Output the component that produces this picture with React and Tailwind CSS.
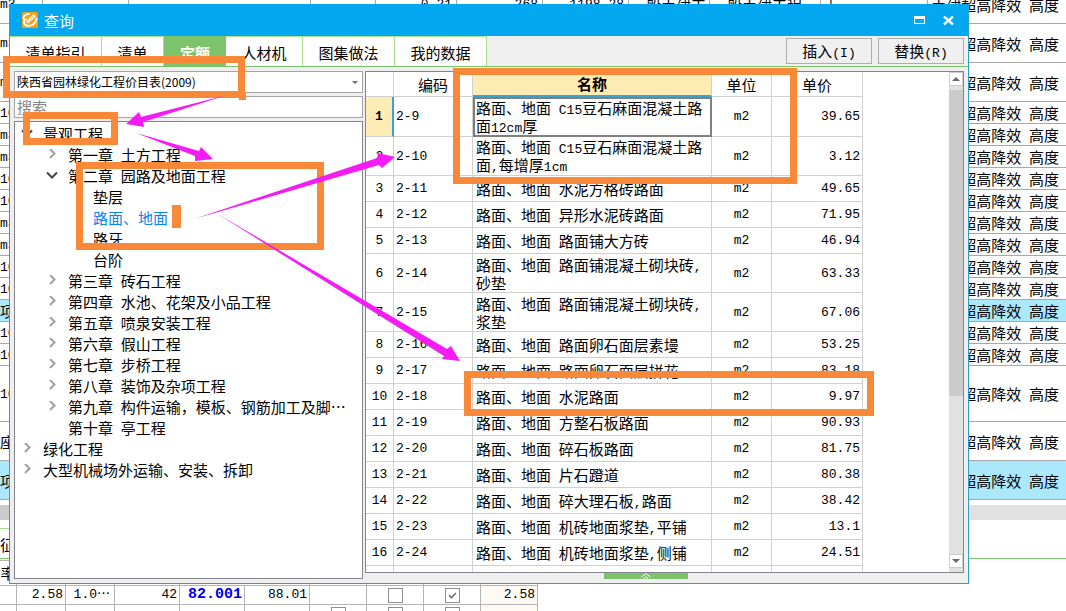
import React from "react";

const MONO = "font-['Liberation_Mono',monospace] text-[13px]";

function Mixed({ text }) {
  return text
    .split(/([\x20-\x7e]+)/)
    .filter(Boolean)
    .map((part, i) =>
      /^[\x20-\x7e]+$/.test(part) ? (
        <span key={i} className={`${MONO} whitespace-pre-wrap leading-none`}>
          {part}
        </span>
      ) : (
        part
      )
    );
}

/* ---------- sheet behind the window ---------- */

const sheetRows = [
  ["m3", "h-[39px]"],
  ["m3", "h-[39px]"],
  ["m3", "h-[39px]"],
  ["10", "h-[22px]"],
  ["m3", "h-[22px]"],
  ["m3", "h-[22px]"],
  ["10", "h-[22px]"],
  ["10", "h-[22px]"],
  ["m3", "h-[22px]"],
  ["m3", "h-[22px]"],
  ["10", "h-[22px]"],
  ["10", "h-[22px]"],
  ["项", "h-[22px] bg-[#ace8fb]"],
  ["10", "h-[22px]"],
  ["10", "h-[22px]"],
  ["10", "h-[56px]"],
  ["座", "h-[39px]"],
  ["项", "h-[39px] bg-[#ace8fb]"],
];

const cell = "flex items-center overflow-hidden whitespace-nowrap border-r border-[#a8a8a8] pt-px";

function SheetRow({ unit, look, first }) {
  return (
    <div className={`flex shrink-0 border-b border-[#a8a8a8] leading-5 ${look}`}>
      <div className={`${cell} w-[43px]`}>
        <Mixed text={unit} />
      </div>
      {first && (
        <>
          <div className={`${cell} w-[86px]`} />
          <div className={`${cell} w-[182px]`} />
          <div className={`${cell} w-[65px]`} />
          <div className={`${cell} w-[81px] justify-end pr-1`}>
            <Mixed text="0.21" />
          </div>
          <div className={`${cell} w-[86px] justify-end pr-1`}>
            <Mixed text="268" />
          </div>
          <div className={`${cell} w-[86px] justify-end pr-1`}>
            <Mixed text="1198.28" />
          </div>
          <div className={`${cell} w-[81px] pl-[2px]`}>一般土建工</div>
          <div className={`${cell} w-[111px] pl-[2px]`}>一般土建工程</div>
          <div className={`${cell} w-[107px] pl-[6px]`}>
            <Mixed text="|" />
          </div>
        </>
      )}
      <div className="flex flex-1 items-center justify-end overflow-hidden whitespace-nowrap pr-[7px] pt-px">
        <span>
          <Mixed text={first ? "土建超高降效 高度" : "超高降效 高度"} />
        </span>
      </div>
    </div>
  );
}

function Tick({ checked, label }) {
  return (
    <span className="mx-auto grid size-[15px] place-items-center">
      <input
        type="checkbox"
        aria-label={label}
        defaultChecked={checked}
        className="col-start-1 row-start-1 size-[15px] appearance-none border border-[#8f8f8f] bg-white"
      />
      {checked && (
        <svg className="pointer-events-none col-start-1 row-start-1 size-[9px]" viewBox="0 0 9 9">
          <path d="M1 4.2 3.5 6.8 8 2" fill="none" stroke="#666" strokeWidth="1.4" />
        </svg>
      )}
    </span>
  );
}

function FeeTable() {
  const td = "border-b border-r border-[#b4b4b4] p-0";
  return (
    <table className="w-[538px] shrink-0 table-fixed border-separate border-spacing-0 border-t border-[#b4b4b4]">
      <colgroup>
        <col className="w-[17px]" />
        <col className="w-[49px]" />
        <col className="w-[49px]" />
        <col className="w-[65px]" />
        <col className="w-[65px]" />
        <col className="w-[65px]" />
        <col className="w-[57px]" />
        <col className="w-[57px]" />
        <col className="w-[57px]" />
        <col className="w-[57px]" />
      </colgroup>
      <thead>
        <tr className="h-[25px] leading-5">
          {["率", "", "", "", "", "价", "主", "价", "主"].map((h, i) => (
            <th key={i} colSpan={i === 4 ? 2 : 1} className={`${td} font-normal`}>
              {h}
            </th>
          ))}
        </tr>
      </thead>
      <tbody className={`${MONO} text-right leading-[18px]`}>
        <tr className="h-[19px]">
          <td className={td} />
          <td className={`${td} pr-[2px]`}>2.58</td>
          <td className={`${td} pr-1`}>
            1.0<span className="font-['Noto_Sans_CJK_SC',sans-serif] leading-none">…</span>
          </td>
          <td className={`${td} pr-[2px]`}>42</td>
          <td className={`${td} pr-[2px] text-[15px] font-bold text-[#0000ee]`}>82.001</td>
          <td className={`${td} pr-[2px]`}>88.01</td>
          <td className={td} />
          <td className={td}>
            <Tick label="主材" />
          </td>
          <td className={td}>
            <Tick label="暂估" checked />
          </td>
          <td className={`${td} bg-[#fff9f3] pr-[2px]`}>2.58</td>
        </tr>
        <tr className="h-[19px]">
          {[0, 0, 0, 0, 0, 0, 1, 1, 1, 0].map((box, i) => (
            <td key={i} className={i === 9 ? `${td} bg-[#fff9f3]` : td}>
              {box ? <Tick label={`选项${i}`} /> : null}
            </td>
          ))}
        </tr>
      </tbody>
    </table>
  );
}

function Sheet() {
  return (
    <div className="flex h-full flex-col overflow-hidden">
      <div className="-mt-[15px] flex shrink-0 flex-col">
        {sheetRows.map(([unit, look], i) => (
          <SheetRow key={i} unit={unit} look={look} first={i === 0} />
        ))}
      </div>
      <div className="mt-[5px] flex h-[15px] shrink-0">
        <div className="w-1/2 bg-[#cbcbcb]" />
        <div className="flex-1 bg-[#e1e1e1]" />
      </div>
      <div className="mt-2 flex h-[31px] shrink-0 items-center border-b border-[#7cc46c]">
        <div className="flex h-full w-1/2 items-center border-t border-[#a9e28f] pt-1">征</div>
      </div>
      <div className="h-px shrink-0" />
      <FeeTable />
    </div>
  );
}

/* ---------- query window ---------- */

function TitleBar() {
  return (
    <header className="flex h-8 shrink-0 items-center bg-[#03a8f1] pl-[12px] pr-[14px] text-white">
      <svg className="size-4" viewBox="0 0 16 16" aria-hidden="true">
        <rect width="16" height="16" rx="1.5" fill="#f9a11b" />
        <path
          d="M7.500 1.800C4 2 1.200 3.800 1.500 6c.1 1 .8 1.500 1.800 1.600C1.800 9 1.500 11 2.800 12.500c2 2 6 1.800 8.500-.2 2-1.600 3.200-4 3.200-6.300"
          fill="none"
          stroke="#fff"
          strokeWidth="1.8"
        />
        <path d="M5 8.200 11.500 2l2.300 2.200L7.200 10.500 4.300 11z" fill="#fff" />
        <path d="M6.500 9 12 3.800M3.500 7 7 3.800" stroke="#f9a11b" strokeWidth=".8" />
      </svg>
      <h1 className="ml-[6px] flex-1 pt-[2px] text-[15px]">查询</h1>
      <button type="button" aria-label="最大化" className="mr-[18px] h-2 w-[11px] border border-t-[3px] border-white" />
      <button type="button" aria-label="关闭">
        <svg className="h-[9px] w-[11px]" viewBox="0 0 11 9">
          <path d="M1 .5 10 8.500M10 .5 1 8.500" stroke="#fff" strokeWidth="2.4" />
        </svg>
      </button>
    </header>
  );
}

function Tabs() {
  const tab = "h-full border-r border-t border-[#a9e28f] bg-white pt-1";
  const action = "h-[26px] w-[86px] border border-[#adadad] bg-[#f0f0f0]";
  return (
    <nav className="flex h-[31px] shrink-0 items-center border-b border-[#7cc46c]">
      <button type="button" className={`${tab} w-[92px]`}>清单指引</button>
      <button type="button" className={`${tab} w-[62px]`}>清单</button>
      <button type="button" className="h-full w-[62px] bg-[#7dc36b] pt-1 font-bold text-white">定额</button>
      <button type="button" className={`${tab} w-[77px]`}>人材机</button>
      <button type="button" className={`${tab} w-[92px]`}>图集做法</button>
      <button type="button" className={`${tab} w-[92px]`}>我的数据</button>
      <div className="ml-auto flex gap-[6px] pr-1">
        <button type="button" className={action}>
          <Mixed text="插入(I)" />
        </button>
        <button type="button" className={action}>
          <Mixed text="替换(R)" />
        </button>
      </div>
    </nav>
  );
}

const tree = [
  [0, "景观工程", "open"],
  [1, "第一章 土方工程", "closed"],
  [1, "第二章 园路及地面工程", "open"],
  [2, "垫层"],
  [2, "路面、地面", "", true],
  [2, "路牙"],
  [2, "台阶"],
  [1, "第三章 砖石工程", "closed"],
  [1, "第四章 水池、花架及小品工程", "closed"],
  [1, "第五章 喷泉安装工程", "closed"],
  [1, "第六章 假山工程", "closed"],
  [1, "第七章 步桥工程", "closed"],
  [1, "第八章 装饰及杂项工程", "closed"],
  [1, "第九章 构件运输，模板、钢筋加工及脚…", "closed"],
  [1, "第十章 亭工程"],
  [0, "绿化工程", "closed"],
  [0, "大型机械场外运输、安装、拆卸", "closed"],
];

const indent = ["pl-[6px]", "pl-[31px]", "pl-[56px]"];

function Twisty({ state }) {
  return (
    <svg className="mr-[10px] size-3 shrink-0" viewBox="0 0 12 12" aria-hidden="true">
      {state === "open" && <path d="M1 2.500 6 7.500l5-5" fill="none" stroke="#444" strokeWidth="2" />}
      {state === "closed" && <path d="M4 0 8.500 4.500 4 9" fill="none" stroke="#a0a0a0" strokeWidth="2" />}
    </svg>
  );
}

function LeftPane() {
  return (
    <div className="flex w-[349px] shrink-0 flex-col gap-[3px]">
      <div className="grid shrink-0">
        <select
          aria-label="定额库"
          className="col-start-1 row-start-1 h-[22px] appearance-none border border-[#a5a5a5] bg-white pl-[2px] text-[12px]"
        >
          <option>陕西省园林绿化工程价目表(2009)</option>
        </select>
        <svg
          className="pointer-events-none col-start-1 row-start-1 mr-[5px] h-[3px] w-[6px] self-center justify-self-end"
          viewBox="0 0 6 3"
        >
          <path d="M0 0h6L3 3z" fill="#6b6b75" />
        </svg>
      </div>
      <input
        type="text"
        aria-label="搜索"
        placeholder="搜索"
        className="h-[22px] w-full shrink-0 border border-[#a5a5a5] bg-white pl-[2px] text-[15px] placeholder:text-[#858585]"
      />
      <ul className="min-h-0 flex-1 overflow-hidden border border-[#84848c] bg-white pt-px">
        {tree.map(([level, text, state, selected]) => (
          <li
            key={text}
            className={`flex h-[21px] items-center whitespace-nowrap leading-5 ${indent[level]} ${selected ? "text-[#0a84f0]" : ""}`}
          >
            <Twisty state={state} />
            <span>
              <Mixed text={text} />
            </span>
          </li>
        ))}
      </ul>
    </div>
  );
}

const items = [
  ["2-9", "路面、地面 C15豆石麻面混凝土路面12cm厚", "39.65", true],
  ["2-10", "路面、地面 C15豆石麻面混凝土路面,每增厚1cm", "3.12", true],
  ["2-11", "路面、地面 水泥方格砖路面", "49.65"],
  ["2-12", "路面、地面 异形水泥砖路面", "71.95"],
  ["2-13", "路面、地面 路面铺大方砖", "46.94"],
  ["2-14", "路面、地面 路面铺混凝土砌块砖,砂垫", "63.33", true],
  ["2-15", "路面、地面 路面铺混凝土砌块砖,浆垫", "67.06", true],
  ["2-16", "路面、地面 路面卵石面层素墁", "53.25"],
  ["2-17", "路面、地面 路面卵石面层拼花", "83.18"],
  ["2-18", "路面、地面 水泥路面", "9.97"],
  ["2-19", "路面、地面 方整石板路面", "90.93"],
  ["2-20", "路面、地面 碎石板路面", "81.75"],
  ["2-21", "路面、地面 片石蹬道", "80.38"],
  ["2-22", "路面、地面 碎大理石板,路面", "38.42"],
  ["2-23", "路面、地面 机砖地面浆垫,平铺", "13.1"],
  ["2-24", "路面、地面 机砖地面浆垫,侧铺", "24.51"],
];

function PriceTable() {
  const b = "border-b border-r border-[#d0d0d0] p-0";
  return (
    <table className="w-[497px] table-fixed border-separate border-spacing-0 leading-[17px]">
      <colgroup>
        <col className="w-[28px]" />
        <col className="w-[79px]" />
        <col className="w-[239px]" />
        <col className="w-[60px]" />
        <col className="w-[91px]" />
      </colgroup>
      <thead>
        <tr className="h-[25px]">
          <th className={b} />
          <th className={`${b} font-normal`}>编码</th>
          <th className="border-b-2 border-r border-b-[#3ba3d0] border-r-[#d0d0d0] bg-[#ffebb4] p-0">名称</th>
          <th className={`${b} font-normal`}>单位</th>
          <th className={`${b} font-normal`}>单价</th>
        </tr>
      </thead>
      <tbody>
        {items.map(([code, name, price, tall], i) => (
          <tr key={code} className={tall ? "h-[39px]" : "h-[26px]"}>
            <th
              className={
                i === 0
                  ? `border-b border-r-2 border-b-[#d0d0d0] border-r-[#3ba3d0] bg-[#ffebb4] p-0 ${MONO}`
                  : `${b} font-normal ${MONO}`
              }
            >
              {i + 1}
            </th>
            <td className={`${b} pl-[2px] ${MONO}`}>{code}</td>
            <td className={i === 0 ? "border-2 border-[#808080] py-0 pl-px pr-0" : `${b} pl-[3px]`}>
              <Mixed text={name} />
            </td>
            <td className={`${b} text-center ${MONO}`}>m2</td>
            <td className={`${b} pr-[2px] text-right ${MONO}`}>{price}</td>
          </tr>
        ))}
        <tr className="h-[26px]">
          <td className={b} />
          <td className={b} />
          <td className={b} />
          <td className={b} />
          <td className={b} />
        </tr>
      </tbody>
    </table>
  );
}

function ScrollBar() {
  const btn = "grid h-[14px] w-full shrink-0 place-items-center border border-[#cbcbcb] bg-white";
  return (
    <div className="flex w-[14px] shrink-0 flex-col bg-[#e1e1e1] pb-1">
      <button type="button" aria-label="向上滚动" className={btn}>
        <svg className="h-1 w-2" viewBox="0 0 8 4">
          <path d="M4 0 8 4H0z" fill="#6b6b75" />
        </svg>
      </button>
      <div className="min-h-0 flex-1 pt-1">
        <div className="h-[66%] bg-[#cbcbcb]" />
      </div>
      <button type="button" aria-label="向下滚动" className={btn}>
        <svg className="h-1 w-2" viewBox="0 0 8 4">
          <path d="M0 0h8L4 4z" fill="#6b6b75" />
        </svg>
      </button>
    </div>
  );
}

function RightPane() {
  return (
    <div className="flex min-w-0 flex-1 flex-col">
      <div className="flex min-h-0 flex-1 border border-[#84848c] bg-white">
        <div className="min-w-0 flex-1 overflow-hidden">
          <PriceTable />
        </div>
        <ScrollBar />
      </div>
      <button
        type="button"
        aria-label="展开"
        className="ml-[239px] grid h-[6px] w-[84px] shrink-0 place-items-center bg-[#7dc36b]"
      >
        <svg className="h-[6px] w-[10px]" viewBox="0 0 10 6">
          <path d="M.5 4 5 .6 9.500 4M2.500 6 5 4l2.500 2" fill="none" stroke="#fff" />
        </svg>
      </button>
    </div>
  );
}

function QueryWindow() {
  return (
    <section className="absolute bottom-[27px] left-[9px] right-[97px] top-1 flex flex-col border-x border-b border-[#2a9fc9] bg-[#efefef]">
      <TitleBar />
      <Tabs />
      <div className="flex min-h-0 flex-1 gap-[2px] px-1 pb-1 pt-1">
        <LeftPane />
        <RightPane />
      </div>
    </section>
  );
}

/* ---------- mark-up drawn over the window ---------- */

function Marks() {
  const box = "absolute border-[7px] border-[#f98938]";
  return (
    <div className="pointer-events-none absolute inset-0 overflow-hidden">
      <div className={`${box} left-[3px] top-[56px] h-[42px] w-[242px]`} />
      <div className="absolute left-[239px] top-[92px] h-2 w-[7px] bg-[#f98938]" />
      <div className={`${box} left-[23px] top-[112px] h-[33px] w-[95px]`} />
      <div className={`${box} left-[76px] top-[162px] h-[88px] w-[248px]`} />
      <div className="absolute left-[172px] top-[205px] h-[23px] w-[9px] bg-[#f98938]" />
      <div className={`${box} left-[453px] top-[68px] h-[116px] w-[344px]`} />
      <div className={`${box} left-[464px] top-[371px] h-[45px] w-[410px]`} />
      <svg className="absolute left-0 top-0 h-[611px] w-[1066px]" viewBox="0 0 1066 611" fill="#f41cf4">
        <path d="M227 95 141 117 139 112 126 124 144 127 143 122z" />
        <path d="M136 133 199 151 201 147 213 159 195 161 195 156z" />
        <path d="M194 219 377 158 378 153 395 157 382 168 379 165z" />
        <path d="M216 213 447 349 451 346 460 361 442 359 444 356z" />
      </svg>
    </div>
  );
}

export default function App() {
  return (
    <main className="relative h-screen overflow-hidden bg-white font-['Noto_Sans_CJK_SC',sans-serif] text-[15px] text-black">
      <Sheet />
      <QueryWindow />
      <Marks />
    </main>
  );
}
